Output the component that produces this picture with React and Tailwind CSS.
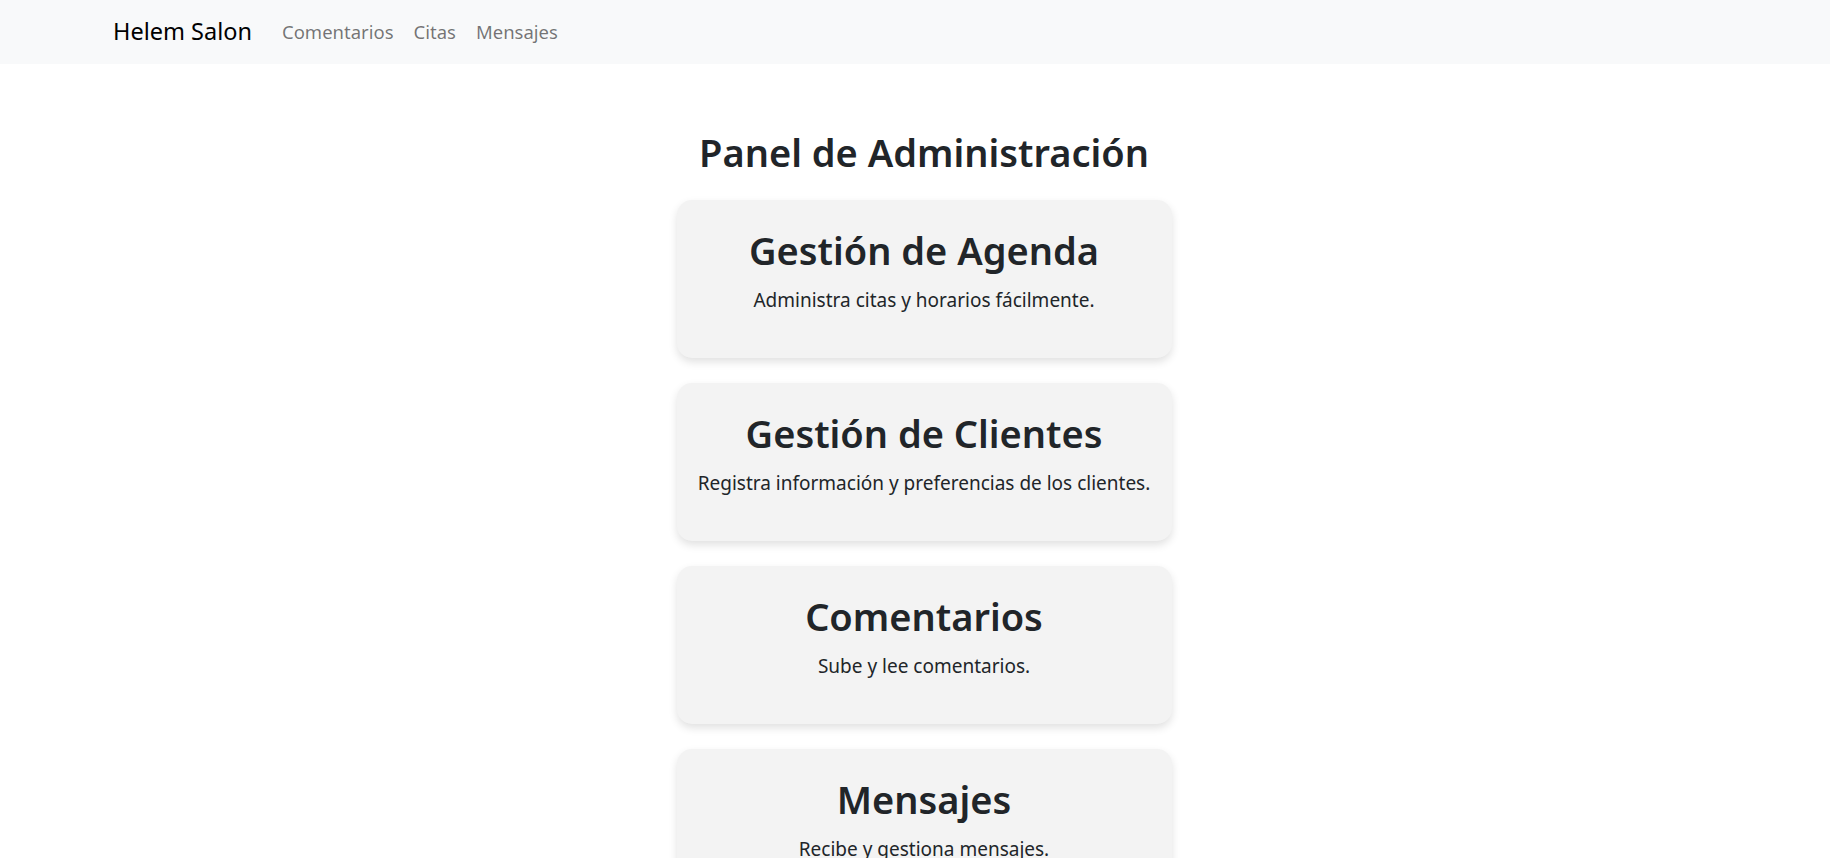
import React from 'react';

const cards = [
  { title: 'Gestión de Agenda', text: 'Administra citas y horarios fácilmente.' },
  { title: 'Gestión de Clientes', text: 'Registra información y preferencias de los clientes.' },
  { title: 'Comentarios', text: 'Sube y lee comentarios.' },
  { title: 'Mensajes', text: 'Recibe y gestiona mensajes.' },
];

const App = () => {
  return (
    <div className="min-h-screen bg-white text-[#212529] font-['Noto_Sans',sans-serif]">
      {/* Navbar */}
      <nav className="h-16 bg-[#f8f9fa] flex items-center pl-[113px]">
        <a href="#" className="text-[23.5px] text-black mr-[30px]">Helem Salon</a>
        <ul className="flex gap-[20px] text-[18.5px] text-black/55">
          <li><a href="#">Comentarios</a></li>
          <li><a href="#">Citas</a></li>
          <li><a href="#">Mensajes</a></li>
        </ul>
      </nav>

      {/* Panel */}
      <main className="flex flex-col items-center pl-[18px] pt-[66px]">
        <h1 className="text-[38px] leading-[1.2] font-semibold mb-[24px]">Panel de Administración</h1>
        <div className="flex flex-col gap-[25px] w-[495px]">
          {cards.map((card) => (
            <div
              key={card.title}
              className="bg-[#f3f3f3] rounded-[15px] shadow-[0_4px_8px_rgba(0,0,0,0.12)] px-4 pt-[28px] pb-[27px] text-center"
            >
              <h2 className="text-[38px] leading-[1.2] font-semibold mb-[13px]">{card.title}</h2>
              <p className="text-[19px] leading-[1.5] mb-4">{card.text}</p>
            </div>
          ))}
        </div>
      </main>
    </div>
  );
};

export default App;
